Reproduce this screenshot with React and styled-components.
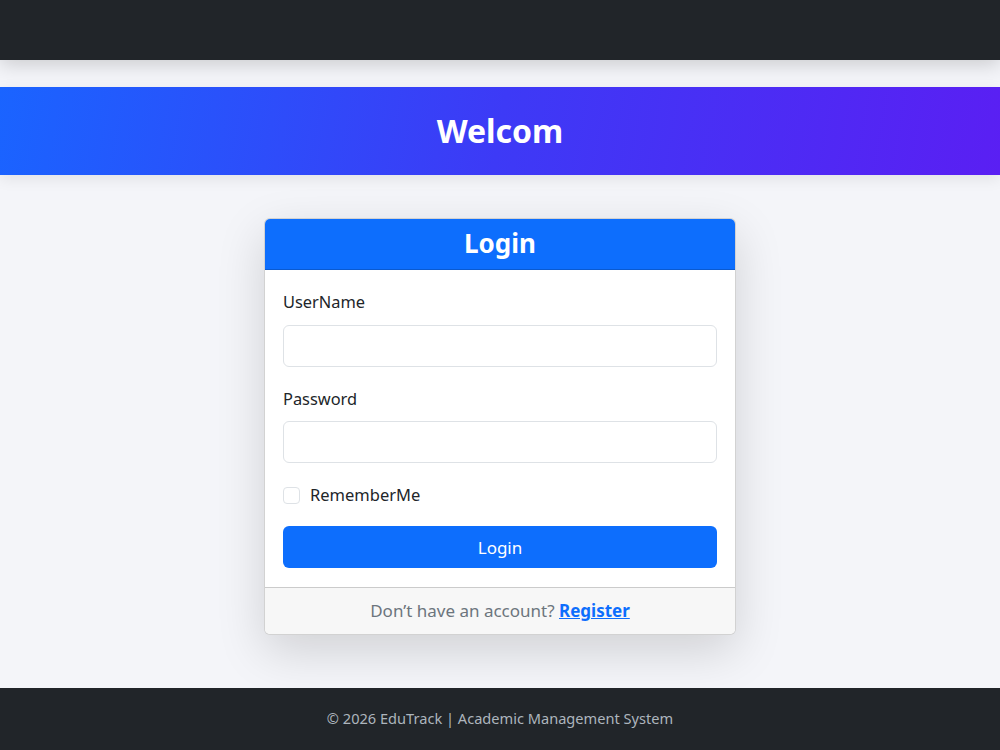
import React from "react";
import styled, { createGlobalStyle } from "styled-components";

const Global = createGlobalStyle`
  * { box-sizing: border-box; }
  html, body { margin: 0; padding: 0; }
  body {
    font-family: "Noto Sans", "Open Sans", "Liberation Sans", sans-serif;
    font-size: 16px;
    line-height: 1.5;
    color: #212529;
    background: #f4f5f9;
  }
`;

const Page = styled.div`
  min-height: 750px;
  display: flex;
  flex-direction: column;
  background: #f4f5f9;
`;

const Navbar = styled.nav`
  height: 60px;
  background: #212529;
  box-shadow: 0 4px 20px rgba(0, 0, 0, 0.18);
  position: relative;
  z-index: 2;
`;

const Hero = styled.header`
  margin-top: 27px;
  padding: 25px 0;
  background: linear-gradient(100deg, #1a64ff 0%, #3d3af6 50%, #5a1ff3 100%);
  text-align: center;
  box-shadow: 0 4px 14px rgba(0, 0, 0, 0.08);
`;

const HeroTitle = styled.h1`
  margin: 0;
  font-size: 32px;
  font-weight: 700;
  line-height: 1.2;
  color: #ffffff;
`;

const Main = styled.main`
  flex: 1;
  display: flex;
  justify-content: center;
  align-items: flex-start;
  padding-top: 43px;
`;

const Card = styled.div`
  width: 472px;
  background: #fff;
  border: 1px solid rgba(0, 0, 0, 0.175);
  border-radius: 6px;
  overflow: hidden;
  box-shadow: 0 16px 48px rgba(0, 0, 0, 0.15);
`;

const CardHeader = styled.div`
  background: #0d6efd;
  border-bottom: 1px solid rgba(0, 0, 0, 0.175);
  padding: 8px 16px;
  text-align: center;
`;

const CardTitle = styled.h3`
  margin: 0;
  font-size: 26px;
  font-weight: 700;
  line-height: 1.3;
  color: #fff;
`;

const CardBody = styled.form`
  padding: 20px 18px 19px;
`;

const Field = styled.div`
  margin-bottom: 20px;
`;

const Label = styled.label`
  display: block;
  margin-bottom: 10px;
  font-size: 16.4px;
  color: #212529;
`;

const Input = styled.input`
  display: block;
  width: 100%;
  height: 42px;
  padding: 6px 12px;
  font: inherit;
  border: 1px solid #dee2e6;
  border-radius: 6px;
  background: #fff;
  outline: none;
`;

const CheckRow = styled.div`
  display: flex;
  align-items: center;
  gap: 10px;
  height: 24px;
  margin-bottom: 19px;
`;

const Check = styled.input`
  appearance: none;
  margin: 0;
  width: 17px;
  height: 17px;
  border: 1px solid #dee2e6;
  border-radius: 4px;
  background: #fff;
`;

const CheckLabel = styled.label`
  font-size: 16.5px;
  color: #212529;
`;

const Button = styled.button`
  display: block;
  width: 100%;
  height: 42px;
  border: none;
  border-radius: 6px;
  background: #0d6efd;
  color: #fff;
  font: inherit;
  font-size: 17px;
  cursor: pointer;
`;

const CardFooter = styled.div`
  background: #f7f7f7;
  border-top: 1px solid rgba(0, 0, 0, 0.175);
  padding: 10px 16px;
  text-align: center;
  color: #6c757d;
  font-size: 17px;
`;

const Link = styled.a`
  color: #0d6efd;
  font-weight: 700;
  text-decoration: underline;
`;

const Footer = styled.footer`
  height: 62px;
  background: #212529;
  color: #adb5bd;
  font-size: 14.6px;
  display: flex;
  align-items: center;
  justify-content: center;
`;

export default function App() {
  return (
    <>
      <Global />
      <Page>
        <Navbar />
        <Hero>
          <HeroTitle>Welcom</HeroTitle>
        </Hero>
        <Main>
          <Card>
            <CardHeader>
              <CardTitle>Login</CardTitle>
            </CardHeader>
            <CardBody onSubmit={(e) => e.preventDefault()}>
              <Field>
                <Label htmlFor="username">UserName</Label>
                <Input id="username" type="text" />
              </Field>
              <Field>
                <Label htmlFor="password">Password</Label>
                <Input id="password" type="password" />
              </Field>
              <CheckRow>
                <Check id="remember" type="checkbox" />
                <CheckLabel htmlFor="remember">RememberMe</CheckLabel>
              </CheckRow>
              <Button type="submit">Login</Button>
            </CardBody>
            <CardFooter>
              Don’t have an account? <Link href="#">Register</Link>
            </CardFooter>
          </Card>
        </Main>
        <Footer>© 2026 EduTrack | Academic Management System</Footer>
      </Page>
    </>
  );
}
